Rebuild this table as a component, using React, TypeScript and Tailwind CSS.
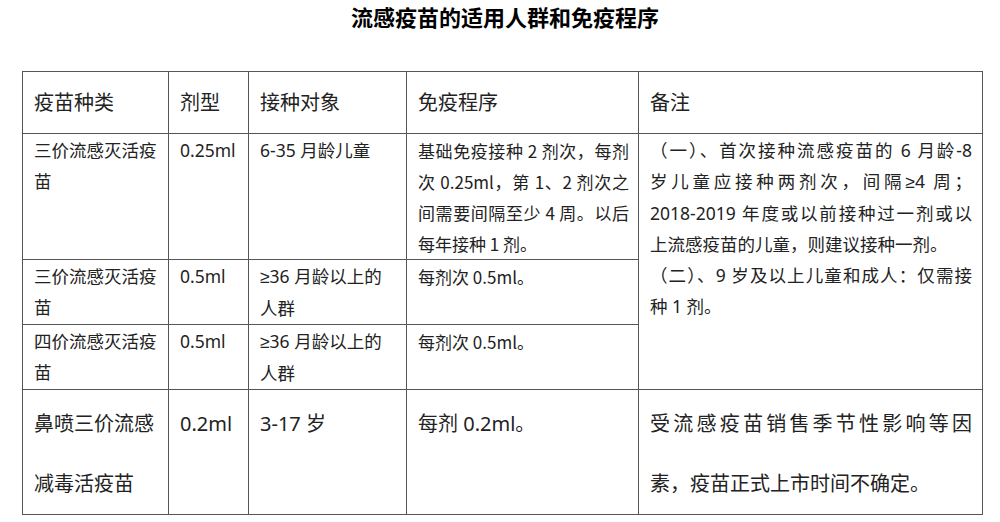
import type { ReactNode } from 'react';

const justify = 'text-justify [text-align-last:justify]';

function Lines({ lines, fill = 0 }: { lines: ReactNode[]; fill?: number }) {
  // fill = number of leading lines stretched to the cell width
  return (
    <>
      {lines.map((line, i) => (
        <div key={i} className={i < fill ? justify : 'whitespace-nowrap'}>
          {line}
        </div>
      ))}
    </>
  );
}

// the straight ≥ of the source document, not the slanted CJK form
const Ge = () => <span className="font-['Liberation_Sans',sans-serif]">≥</span>;

const th = 'border border-[#555] px-[11px] text-left align-middle font-normal text-[20px]';
const td = 'border border-[#555] px-[11px] pt-[1px] align-top text-[17.5px] leading-[31px]';
const tdBig = 'border border-[#555] px-[11px] pt-[4px] align-top text-[20px] leading-[60px]';
const narrow = "font-['Noto_Sans_CJK_SC',sans-serif] text-[17px]";

export default function App() {
  return (
    <div className="w-[1000px] h-[522px] bg-white text-[#222] font-['Noto_Sans','Noto_Sans_CJK_SC',sans-serif]">
      <h1 className="pl-[10px] h-[71px] pt-[3px] text-center text-[22px] leading-[28px] font-bold text-black">
        流感疫苗的适用人群和免疫程序
      </h1>
      <table className="ml-[22px] w-[960px] table-fixed border-collapse">
        <colgroup>
          <col className="w-[146px]" />
          <col className="w-[80px]" />
          <col className="w-[158px]" />
          <col className="w-[232px]" />
          <col className="w-[344px]" />
        </colgroup>
        <thead>
          <tr className="h-[62px]">
            <th className={th}>疫苗种类</th>
            <th className={th}>剂型</th>
            <th className={th}>接种对象</th>
            <th className={th}>免疫程序</th>
            <th className={th}>备注</th>
          </tr>
        </thead>
        <tbody>
          <tr className="h-[125px]">
            <td className={td}>
              <Lines lines={['三价流感灭活疫', '苗']} />
            </td>
            <td className={td}>0.25ml</td>
            <td className={td}>6-35 月龄儿童</td>
            <td className={`${td} pr-[9px] ${narrow}`}>
              <Lines
                fill={3}
                lines={[
                  '基础免疫接种 2 剂次，每剂',
                  '次 0.25ml，第 1、2 剂次之',
                  '间需要间隔至少 4 周。以后',
                  '每年接种 1 剂。',
                ]}
              />
            </td>
            <td rowSpan={3} className={`${td} pr-[10px]`}>
              <Lines
                fill={3}
                lines={[
                  '（一）、首次接种流感疫苗的 6 月龄-8',
                  <>
                    岁儿童应接种两剂次，间隔<Ge />4 周；
                  </>,
                  '2018-2019 年度或以前接种过一剂或以',
                  '上流感疫苗的儿童，则建议接种一剂。',
                ]}
              />
              <Lines fill={1} lines={['（二）、9 岁及以上儿童和成人：仅需接', '种 1 剂。']} />
            </td>
          </tr>
          <tr className="h-[64px]">
            <td className={td}>
              <Lines lines={['三价流感灭活疫', '苗']} />
            </td>
            <td className={td}>0.5ml</td>
            <td className={td}>
              <Lines
                lines={[
                  <>
                    <Ge />
                    36 月龄以上的
                  </>,
                  '人群',
                ]}
              />
            </td>
            <td className={`${td} ${narrow}`}>每剂次 0.5ml。</td>
          </tr>
          <tr className="h-[64px]">
            <td className={td}>
              <Lines lines={['四价流感灭活疫', '苗']} />
            </td>
            <td className={td}>0.5ml</td>
            <td className={td}>
              <Lines
                lines={[
                  <>
                    <Ge />
                    36 月龄以上的
                  </>,
                  '人群',
                ]}
              />
            </td>
            <td className={`${td} ${narrow}`}>每剂次 0.5ml。</td>
          </tr>
          <tr className="h-[124px]">
            <td className={tdBig}>
              <Lines lines={['鼻喷三价流感', '减毒活疫苗']} />
            </td>
            <td className={tdBig}>0.2ml</td>
            <td className={tdBig}>3-17 岁</td>
            <td className={tdBig}>每剂 0.2ml。</td>
            <td className={`${tdBig} pr-[10px]`}>
              <Lines fill={1} lines={['受流感疫苗销售季节性影响等因', '素，疫苗正式上市时间不确定。']} />
            </td>
          </tr>
        </tbody>
      </table>
    </div>
  );
}
